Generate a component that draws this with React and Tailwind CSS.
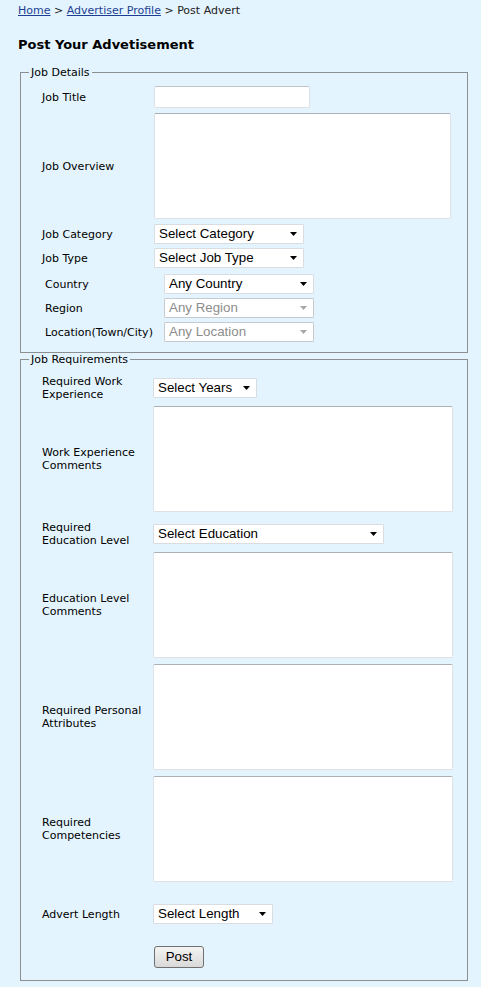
import React from "react";

const font = "font-['DejaVu_Sans',Verdana,sans-serif]";
const sel = "font-['Liberation_Sans',Arial,sans-serif]";

function Arrow({ disabled }) {
  return (
    <svg width="7" height="4" viewBox="0 0 7 4" className="shrink-0">
      <path d="M0 0H7L3.5 4Z" fill={disabled ? "#a8a8a8" : "#000"} />
    </svg>
  );
}

function Select({ text, w, disabled }) {
  return (
    <div
      className={`flex items-center justify-between h-[20px] bg-white border rounded-[1px] pl-[4px] pr-[6px] text-[13.33px] leading-none ${sel} ${
        disabled ? "text-[#8d8d8d] border-[#c8ccd0]" : "text-black border-[#d9dde1]"
      } ${w}`}
    >
      <span>{text}</span>
      <Arrow disabled={disabled} />
    </div>
  );
}

function Textarea({ w }) {
  return (
    <div
      className={`h-[106px] bg-white border border-[#dde1e5] border-t-[#aab0b6] rounded-[2px] ${w}`}
    />
  );
}

function Row({ label, lw, children, className = "" }) {
  return (
    <div className={`flex items-center ${className}`}>
      <div className={`shrink-0 leading-[13px] pr-[4px] ${lw}`}>{label}</div>
      {children}
    </div>
  );
}

export default function App() {
  return (
    <div className={`min-h-[987px] bg-[#e4f4fe] text-[11px] text-black ${font} px-[18px]`}>
      <div className="pt-[4px] leading-[14px] text-[#222]">
        <span className="text-[#1c3f94] underline">Home</span>
        <span> &gt; </span>
        <span className="text-[#1c3f94] underline">Advertiser Profile</span>
        <span> &gt; Post Advert</span>
      </div>

      <h1 className="mt-[19px] text-[13px] font-bold leading-[16px]">Post Your Advetisement</h1>

      <fieldset className="mt-[13px] ml-[2px] w-[448px] border border-[#8b8f93] pb-[10px]">
        <legend className="ml-[8px] px-[2px] leading-[12px] pt-[1px]">Job Details</legend>
        <div className="pl-[21px] flex flex-col">
          <Row label="Job Title" lw="w-[112px]" className="mt-[7px]">
            <div className="h-[22px] w-[156px] bg-white border border-[#dde1e5] border-t-[#c0c5ca] rounded-[2px]" />
          </Row>
          <Row label="Job Overview" lw="w-[112px]" className="mt-[5px]">
            <Textarea w="w-[297px]" />
          </Row>
          <Row label="Job Category" lw="w-[112px]" className="mt-[5px]">
            <Select text="Select Category" w="w-[150px]" />
          </Row>
          <Row label="Job Type" lw="w-[112px]" className="mt-[4px]">
            <Select text="Select Job Type" w="w-[150px]" />
          </Row>
        </div>
        <div className="pl-[24px] flex flex-col">
          <Row label="Country" lw="w-[119px]" className="mt-[6px]">
            <Select text="Any Country" w="w-[150px]" />
          </Row>
          <Row label="Region" lw="w-[119px]" className="mt-[4px]">
            <Select text="Any Region" w="w-[150px]" disabled />
          </Row>
          <Row label="Location(Town/City)" lw="w-[119px]" className="mt-[4px]">
            <Select text="Any Location" w="w-[150px]" disabled />
          </Row>
        </div>
      </fieldset>

      <fieldset className="ml-[2px] w-[448px] border border-[#8b8f93] pb-[12px]">
        <legend className="ml-[8px] px-[2px] leading-[12px] pt-[1px]">Job Requirements</legend>
        <div className="pl-[21px] flex flex-col">
          <Row label="Required Work Experience" lw="w-[111px]" className="mt-[9px]">
            <Select text="Select Years" w="w-[104px]" />
          </Row>
          <Row label="Work Experience Comments" lw="w-[111px]" className="mt-[5px]">
            <Textarea w="w-[300px]" />
          </Row>
          <Row label="Required Education Level" lw="w-[111px]" className="mt-[9px]">
            <Select text="Select Education" w="w-[231px]" />
          </Row>
          <Row label="Education Level Comments" lw="w-[111px]" className="mt-[5px]">
            <Textarea w="w-[300px]" />
          </Row>
          <Row label="Required Personal Attributes" lw="w-[111px]" className="mt-[6px]">
            <Textarea w="w-[300px]" />
          </Row>
          <Row label="Required Competencies" lw="w-[111px]" className="mt-[6px]">
            <Textarea w="w-[300px]" />
          </Row>
          <Row label="Advert Length" lw="w-[111px]" className="mt-[22px]">
            <Select text="Select Length" w="w-[120px]" />
          </Row>
          <div className="mt-[22px] pl-[112px]">
            <button
              className={`h-[22px] w-[50px] rounded-[3px] border border-[#707070] bg-gradient-to-b from-[#f4f4f4] to-[#d9d9d9] text-[13.33px] leading-none text-black ${sel}`}
            >
              Post
            </button>
          </div>
        </div>
      </fieldset>
    </div>
  );
}
